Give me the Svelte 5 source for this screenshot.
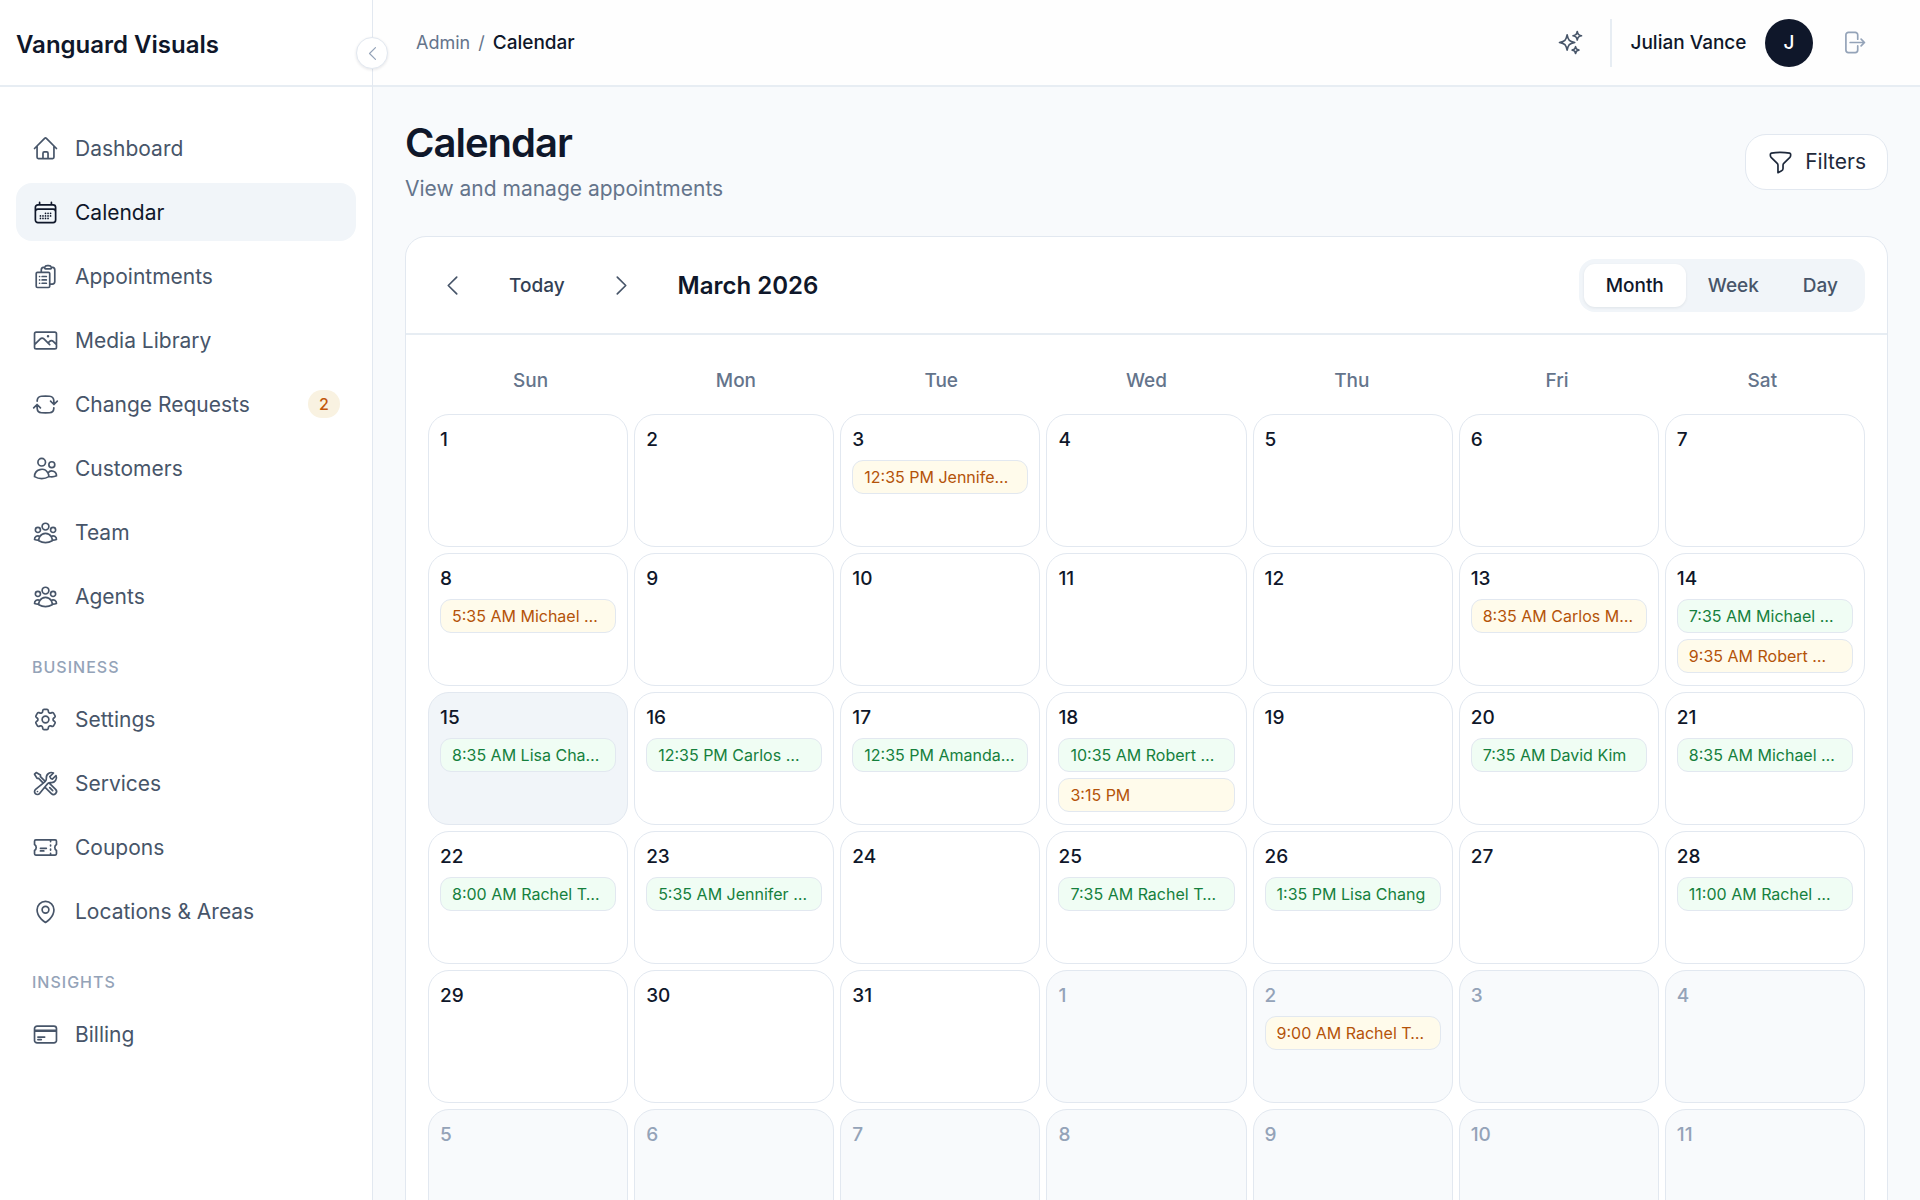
<script lang="ts">
	type Status = 'confirmed' | 'pending';
	type Booking = { label: string; status: Status };
	type Day = { key: string; number: number; outside: boolean; today: boolean; bookings: Booking[] };

	const icons = {
		home: 'm2.25 12 8.954-8.955c.44-.439 1.152-.439 1.591 0L21.75 12M4.5 9.75v10.125c0 .621.504 1.125 1.125 1.125H9.75v-4.875c0-.621.504-1.125 1.125-1.125h2.25c.621 0 1.125.504 1.125 1.125V21h4.125c.621 0 1.125-.504 1.125-1.125V9.75M8.25 21h8.25',
		calendar:
			'M6.75 3v2.25M17.25 3v2.25M3 18.75V7.5a2.25 2.25 0 0 1 2.25-2.25h13.5A2.25 2.25 0 0 1 21 7.5v11.25m-18 0A2.25 2.25 0 0 0 5.25 21h13.5A2.25 2.25 0 0 0 21 18.75m-18 0v-7.5A2.25 2.25 0 0 1 5.25 9h13.5A2.25 2.25 0 0 1 21 11.25v7.5m-9-6h.008v.008H12v-.008ZM12 15h.008v.008H12V15Zm0 2.25h.008v.008H12v-.008ZM9.75 15h.008v.008H9.75V15Zm0 2.25h.008v.008H9.75v-.008ZM7.5 15h.008v.008H7.5V15Zm0 2.25h.008v.008H7.5v-.008Zm6.75-4.5h.008v.008h-.008v-.008Zm0 2.25h.008v.008h-.008V15Zm0 2.25h.008v.008h-.008v-.008Zm2.25-4.5h.008v.008H16.5v-.008Zm0 2.25h.008v.008H16.5V15Z',
		clipboard:
			'M9 12h3.75M9 15h3.75M9 18h3.75m3 .75H18a2.25 2.25 0 0 0 2.25-2.25V6.108c0-1.135-.845-2.098-1.976-2.192a48.424 48.424 0 0 0-1.123-.08m-5.801 0c-.065.21-.1.433-.1.664 0 .414.336.75.75.75h4.5a.75.75 0 0 0 .75-.75 2.25 2.25 0 0 0-.1-.664m-5.8 0A2.251 2.251 0 0 1 13.5 2.25H15c1.012 0 1.867.668 2.15 1.586m-5.8 0c-.376.023-.75.05-1.124.08C9.095 4.01 8.25 4.973 8.25 6.108V8.25m0 0H4.875c-.621 0-1.125.504-1.125 1.125v11.25c0 .621.504 1.125 1.125 1.125h9.75c.621 0 1.125-.504 1.125-1.125V9.375c0-.621-.504-1.125-1.125-1.125H8.25ZM6.75 12h.008v.008H6.75V12Zm0 3h.008v.008H6.75V15Zm0 3h.008v.008H6.75V18Z',
		photo: 'm2.25 15.75 5.159-5.159a2.25 2.25 0 0 1 3.182 0l5.159 5.159m-1.5-1.5 1.409-1.409a2.25 2.25 0 0 1 3.182 0l2.909 2.909m-18 3.75h16.5a1.5 1.5 0 0 0 1.5-1.5V6a1.5 1.5 0 0 0-1.5-1.5H3.75A1.5 1.5 0 0 0 2.25 6v12a1.5 1.5 0 0 0 1.5 1.5Zm10.5-11.25h.008v.008h-.008V8.25Zm.375 0a.375.375 0 1 1-.75 0 .375.375 0 0 1 .75 0Z',
		cycle: 'M19.5 12c0-1.232-.046-2.453-.138-3.662a4.006 4.006 0 0 0-3.7-3.7 48.678 48.678 0 0 0-7.324 0 4.006 4.006 0 0 0-3.7 3.7c-.017.22-.032.441-.046.662M19.5 12l3-3m-3 3-3-3m-12 3c0 1.232.046 2.453.138 3.662a4.006 4.006 0 0 0 3.7 3.7 48.656 48.656 0 0 0 7.324 0 4.006 4.006 0 0 0 3.7-3.7c.017-.22.032-.441.046-.662M4.5 12l3 3m-3-3-3 3',
		users: 'M15 19.128a9.38 9.38 0 0 0 2.625.372 9.337 9.337 0 0 0 4.121-.952 4.125 4.125 0 0 0-7.533-2.493M15 19.128v-.003c0-1.113-.285-2.16-.786-3.07M15 19.128v.106A12.318 12.318 0 0 1 8.624 21c-2.331 0-4.512-.645-6.374-1.766l-.001-.109a6.375 6.375 0 0 1 11.964-3.07M12 6.375a3.375 3.375 0 1 1-6.75 0 3.375 3.375 0 0 1 6.75 0Zm8.25 2.25a2.625 2.625 0 1 1-5.25 0 2.625 2.625 0 0 1 5.25 0Z',
		group: 'M18 18.72a9.094 9.094 0 0 0 3.741-.479 3 3 0 0 0-4.682-2.72m.94 3.198.001.031c0 .225-.012.447-.037.666A11.944 11.944 0 0 1 12 21c-2.17 0-4.207-.576-5.963-1.584A6.062 6.062 0 0 1 6 18.719m12 0a5.971 5.971 0 0 0-.941-3.197m0 0A5.995 5.995 0 0 0 12 12.75a5.995 5.995 0 0 0-5.058 2.772m0 0a3 3 0 0 0-4.681 2.72 8.986 8.986 0 0 0 3.74.477m.94-3.197a5.971 5.971 0 0 0-.94 3.197M15 6.75a3 3 0 1 1-6 0 3 3 0 0 1 6 0Zm6 3a2.25 2.25 0 1 1-4.5 0 2.25 2.25 0 0 1 4.5 0Zm-13.5 0a2.25 2.25 0 1 1-4.5 0 2.25 2.25 0 0 1 4.5 0Z',
		cog: 'M9.594 3.94c.09-.542.56-.94 1.11-.94h2.593c.55 0 1.02.398 1.11.94l.213 1.281c.063.374.313.686.645.87.074.04.147.083.22.127.325.196.72.257 1.075.124l1.217-.456a1.125 1.125 0 0 1 1.37.49l1.296 2.247a1.125 1.125 0 0 1-.26 1.431l-1.003.827c-.293.241-.438.613-.43.992a7.723 7.723 0 0 1 0 .255c-.008.378.137.75.43.991l1.004.827c.424.35.534.955.26 1.43l-1.298 2.247a1.125 1.125 0 0 1-1.369.491l-1.217-.456c-.355-.133-.75-.072-1.076.124a6.47 6.47 0 0 1-.22.128c-.331.183-.581.495-.644.869l-.213 1.281c-.09.543-.56.94-1.11.94h-2.594c-.55 0-1.019-.398-1.11-.94l-.213-1.281c-.062-.374-.312-.686-.644-.87a6.52 6.52 0 0 1-.22-.127c-.325-.196-.72-.257-1.076-.124l-1.217.456a1.125 1.125 0 0 1-1.369-.49l-1.297-2.247a1.125 1.125 0 0 1 .26-1.431l1.004-.827c.292-.24.437-.613.43-.991a6.932 6.932 0 0 1 0-.255c.007-.38-.138-.751-.43-.992l-1.004-.827a1.125 1.125 0 0 1-.26-1.43l1.297-2.247a1.125 1.125 0 0 1 1.37-.491l1.216.456c.356.133.751.072 1.076-.124.072-.044.146-.086.22-.128.332-.183.582-.495.644-.869l.214-1.28ZM15 12a3 3 0 1 1-6 0 3 3 0 0 1 6 0Z',
		tools: 'M11.42 15.17 17.25 21A2.652 2.652 0 0 0 21 17.25l-5.877-5.877M11.42 15.17l2.496-3.03c.317-.384.74-.626 1.208-.766M11.42 15.17l-4.655 5.653a2.548 2.548 0 1 1-3.586-3.586l6.837-5.63m5.108-.233c.55-.164 1.163-.188 1.743-.14a4.5 4.5 0 0 0 4.486-6.336l-3.276 3.277a3.004 3.004 0 0 1-2.25-2.25l3.276-3.276a4.5 4.5 0 0 0-6.336 4.486c.091 1.076-.071 2.264-.904 2.95l-.102.085m-1.745 1.437L5.909 7.5H4.5L2.25 3.75l1.5-1.5L7.5 4.5v1.409l4.26 4.26m-1.745 1.437 1.745-1.437m6.615 8.206L15.75 15.75M4.867 19.125h.008v.008h-.008v-.008Z',
		ticket: 'M16.5 6v.75m0 3v.75m0 3v.75m0 3V18m-9-5.25h5.25M7.5 15h3M3.375 5.25c-.621 0-1.125.504-1.125 1.125v3.026a2.999 2.999 0 0 1 0 5.198v3.026c0 .621.504 1.125 1.125 1.125h17.25c.621 0 1.125-.504 1.125-1.125v-3.026a2.999 2.999 0 0 1 0-5.198V6.375c0-.621-.504-1.125-1.125-1.125H3.375Z',
		pin: 'M15 10.5a3 3 0 1 1-6 0 3 3 0 0 1 6 0ZM19.5 10.5c0 7.142-7.5 11.25-7.5 11.25S4.5 17.642 4.5 10.5a7.5 7.5 0 1 1 15 0Z',
		card: 'M2.25 8.25h19.5M2.25 9h19.5m-16.5 5.25h6m-6 2.25h3m-3.75 3h15a2.25 2.25 0 0 0 2.25-2.25V6.75A2.25 2.25 0 0 0 19.5 4.5h-15a2.25 2.25 0 0 0-2.25 2.25v10.5A2.25 2.25 0 0 0 4.5 19.5Z',
		sparkles:
			'M9.813 15.904 9 18.75l-.813-2.846a4.5 4.5 0 0 0-3.09-3.09L2.25 12l2.846-.813a4.5 4.5 0 0 0 3.09-3.09L9 5.25l.813 2.846a4.5 4.5 0 0 0 3.09 3.09L15.75 12l-2.846.813a4.5 4.5 0 0 0-3.09 3.09ZM18.259 8.715 18 9.75l-.259-1.035a3.375 3.375 0 0 0-2.455-2.456L14.25 6l1.036-.259a3.375 3.375 0 0 0 2.455-2.456L18 2.25l.259 1.035a3.375 3.375 0 0 0 2.456 2.456L21.75 6l-1.035.259a3.375 3.375 0 0 0-2.456 2.456ZM16.894 20.567 16.5 21.75l-.394-1.183a2.25 2.25 0 0 0-1.423-1.423L13.5 18.75l1.183-.394a2.25 2.25 0 0 0 1.423-1.423l.394-1.183.394 1.183a2.25 2.25 0 0 0 1.423 1.423l1.183.394-1.183.394a2.25 2.25 0 0 0-1.423 1.423Z',
		logout: 'M15.75 9V5.25A2.25 2.25 0 0 0 13.5 3h-6a2.25 2.25 0 0 0-2.25 2.25v13.5A2.25 2.25 0 0 0 7.5 21h6a2.25 2.25 0 0 0 2.25-2.25V15m3 0 3-3m0 0-3-3m3 3H9',
		funnel: 'M12 3c2.755 0 5.455.232 8.083.678.533.09.917.556.917 1.096v1.044a2.25 2.25 0 0 1-.659 1.591l-5.432 5.432a2.25 2.25 0 0 0-.659 1.591v2.927a2.25 2.25 0 0 1-1.244 2.013L9.75 21v-6.568a2.25 2.25 0 0 0-.659-1.591L3.659 7.409A2.25 2.25 0 0 1 3 5.818V4.774c0-.54.384-1.006.917-1.096A48.32 48.32 0 0 1 12 3Z',
		left: 'M15.75 19.5 8.25 12l7.5-7.5',
		right: 'm8.25 4.5 7.5 7.5-7.5 7.5'
	};

	type NavItem = { label: string; icon: keyof typeof icons; badge?: number };

	const navGroups: { title?: string; items: NavItem[] }[] = [
		{
			items: [
				{ label: 'Dashboard', icon: 'home' },
				{ label: 'Calendar', icon: 'calendar' },
				{ label: 'Appointments', icon: 'clipboard' },
				{ label: 'Media Library', icon: 'photo' },
				{ label: 'Change Requests', icon: 'cycle', badge: 2 },
				{ label: 'Customers', icon: 'users' },
				{ label: 'Team', icon: 'group' },
				{ label: 'Agents', icon: 'group' }
			]
		},
		{
			title: 'Business',
			items: [
				{ label: 'Settings', icon: 'cog' },
				{ label: 'Services', icon: 'tools' },
				{ label: 'Coupons', icon: 'ticket' },
				{ label: 'Locations & Areas', icon: 'pin' }
			]
		},
		{
			title: 'Insights',
			items: [{ label: 'Billing', icon: 'card' }]
		}
	];

	const weekdays = ['Sun', 'Mon', 'Tue', 'Wed', 'Thu', 'Fri', 'Sat'];
	const views = ['Month', 'Week', 'Day'];

	const bookings: Record<string, Booking[]> = {
		'3-3': [{ label: '12:35 PM Jennife…', status: 'pending' }],
		'3-8': [{ label: '5:35 AM Michael …', status: 'pending' }],
		'3-13': [{ label: '8:35 AM Carlos M…', status: 'pending' }],
		'3-14': [
			{ label: '7:35 AM Michael …', status: 'confirmed' },
			{ label: '9:35 AM Robert …', status: 'pending' }
		],
		'3-15': [{ label: '8:35 AM Lisa Cha…', status: 'confirmed' }],
		'3-16': [{ label: '12:35 PM Carlos …', status: 'confirmed' }],
		'3-17': [{ label: '12:35 PM Amanda…', status: 'confirmed' }],
		'3-18': [
			{ label: '10:35 AM Robert …', status: 'confirmed' },
			{ label: '3:15 PM', status: 'pending' }
		],
		'3-20': [{ label: '7:35 AM David Kim', status: 'confirmed' }],
		'3-21': [{ label: '8:35 AM Michael …', status: 'confirmed' }],
		'3-22': [{ label: '8:00 AM Rachel T…', status: 'confirmed' }],
		'3-23': [{ label: '5:35 AM Jennifer …', status: 'confirmed' }],
		'3-25': [{ label: '7:35 AM Rachel T…', status: 'confirmed' }],
		'3-26': [{ label: '1:35 PM Lisa Chang', status: 'confirmed' }],
		'3-28': [{ label: '11:00 AM Rachel …', status: 'confirmed' }],
		'4-2': [{ label: '9:00 AM Rachel T…', status: 'pending' }]
	};

	// March 2026 starts on a Sunday, the grid always shows six weeks
	const days: Day[] = Array.from({ length: 42 }, (_, i) => {
		const month = i < 31 ? 3 : 4;
		const number = i < 31 ? i + 1 : i - 30;
		const key = `${month}-${number}`;
		return { key, number, outside: month !== 3, today: key === '3-15', bookings: bookings[key] ?? [] };
	});

	let activeItem = $state('Calendar');
	let activeView = $state('Month');
</script>

{#snippet icon(name: keyof typeof icons)}
	<svg class="icon" viewBox="0 0 24 24" aria-hidden="true">
		<path d={icons[name]} />
	</svg>
{/snippet}

<div class="shell">
	<aside class="sidebar">
		<div class="brand">Vanguard Visuals</div>
		<button class="collapse" aria-label="Collapse sidebar">{@render icon('left')}</button>

		<nav class="nav">
			{#each navGroups as group}
				<div class="nav-group">
					{#if group.title}
						<h2 class="nav-title">{group.title}</h2>
					{/if}
					{#each group.items as item}
						<a
							href="#{item.label}"
							class="nav-item"
							class:active={item.label === activeItem}
							onclick={() => (activeItem = item.label)}
						>
							{@render icon(item.icon)}
							<span class="nav-label">{item.label}</span>
							{#if item.badge}
								<span class="badge">{item.badge}</span>
							{/if}
						</a>
					{/each}
				</div>
			{/each}
		</nav>
	</aside>

	<div class="content">
		<header class="topbar">
			<nav class="breadcrumb" aria-label="Breadcrumb">
				<a href="#admin">Admin</a>
				<span>/</span>
				<strong>Calendar</strong>
			</nav>
			<div class="account">
				<button class="icon-btn" aria-label="Assistant">{@render icon('sparkles')}</button>
				<div class="user">
					<span class="user-name">Julian Vance</span>
					<span class="avatar">J</span>
				</div>
				<button class="icon-btn muted" aria-label="Sign out">{@render icon('logout')}</button>
			</div>
		</header>

		<main class="page">
			<div class="page-head">
				<div>
					<h1>Calendar</h1>
					<p>View and manage appointments</p>
				</div>
				<button class="filters">{@render icon('funnel')}Filters</button>
			</div>

			<section class="calendar">
				<div class="toolbar">
					<div class="period">
						<button class="icon-btn" aria-label="Previous month">{@render icon('left')}</button>
						<button class="today-btn">Today</button>
						<button class="icon-btn" aria-label="Next month">{@render icon('right')}</button>
						<h2>March 2026</h2>
					</div>
					<div class="views">
						{#each views as view}
							<button class:active={view === activeView} onclick={() => (activeView = view)}>
								{view}
							</button>
						{/each}
					</div>
				</div>

				<div class="month">
					<div class="weekdays">
						{#each weekdays as weekday}
							<div>{weekday}</div>
						{/each}
					</div>
					<div class="days">
						{#each days as day (day.key)}
							<div class="day" class:outside={day.outside} class:today={day.today}>
								<span class="day-number">{day.number}</span>
								{#each day.bookings as booking}
									<button class="booking {booking.status}">{booking.label}</button>
								{/each}
							</div>
						{/each}
					</div>
				</div>
			</section>
		</main>
	</div>
</div>

<style>
	:global(body) {
		margin: 0;
	}

	.shell {
		--ink: #0f172a;
		--text: #475569;
		--soft: #64748b;
		--faint: #94a3b8;
		--line: #e2e8f0;
		--rule: #e7edf3;
		--fill: #f1f5f9;

		display: flex;
		height: 100vh;
		overflow: hidden;
		background: #f8fafc;
		color: var(--ink);
		font-family: Inter, 'Liberation Sans', sans-serif;
		font-size: 19px;
		line-height: 28px;
	}

	.shell * {
		box-sizing: border-box;
	}

	h1,
	h2,
	p {
		margin: 0;
	}

	a {
		color: inherit;
		text-decoration: none;
	}

	button {
		padding: 0;
		border: 0;
		background: none;
		color: inherit;
		font: inherit;
		cursor: pointer;
	}

	.icon {
		flex: none;
		width: 27px;
		height: 27px;
		fill: none;
		stroke: currentColor;
		stroke-width: 1.5;
		stroke-linecap: round;
		stroke-linejoin: round;
	}

	.sidebar {
		position: relative;
		display: flex;
		flex-direction: column;
		flex: none;
		width: 373px;
		border-right: 1px solid var(--line);
		background: white;
	}

	.brand {
		display: flex;
		align-items: center;
		height: 87px;
		padding: 4px 16px 0;
		border-bottom: 2px solid var(--rule);
		font-size: 24px;
		font-weight: 600;
	}

	.collapse {
		position: absolute;
		top: 37px;
		right: -16px;
		z-index: 1;
		display: flex;
		align-items: center;
		justify-content: center;
		width: 32px;
		height: 32px;
		border: 1px solid var(--line);
		border-radius: 50%;
		background: white;
		box-shadow: 0 1px 3px rgba(15, 23, 42, 0.1);
		color: var(--faint);
	}

	.collapse .icon {
		width: 19px;
		height: 19px;
	}

	.nav {
		padding: 32px 16px;
		overflow-y: auto;
		scrollbar-width: none;
	}

	.nav-group {
		display: flex;
		flex-direction: column;
		gap: 6px;
	}

	.nav-title {
		padding: 32px 16px 6px;
		color: var(--faint);
		font-size: 16px;
		font-weight: 500;
		line-height: 21px;
		letter-spacing: 1px;
		text-transform: uppercase;
	}

	.nav-item {
		display: flex;
		align-items: center;
		gap: 16px;
		height: 58px;
		padding: 0 16px;
		border-radius: 16px;
		color: var(--text);
		font-size: 21px;
	}

	.nav-item.active {
		background: var(--fill);
		color: var(--ink);
	}

	.nav-label {
		flex: 1;
		padding-top: 2px;
	}

	.badge {
		min-width: 32px;
		border-radius: 14px;
		background: #f9f2e1;
		color: #c2570c;
		font-size: 16px;
		font-weight: 500;
		text-align: center;
	}

	.content {
		display: flex;
		flex-direction: column;
		flex: 1;
		min-width: 0;
	}

	.topbar {
		display: flex;
		align-items: center;
		justify-content: space-between;
		flex: none;
		height: 87px;
		padding: 0 43px;
		border-bottom: 2px solid var(--rule);
		background: #fefefe;
	}

	.breadcrumb {
		display: flex;
		gap: 8px;
		color: var(--soft);
		font-size: 18px;
	}

	.breadcrumb strong {
		color: var(--ink);
		font-size: 19px;
		font-weight: 500;
	}

	.account {
		display: flex;
		align-items: center;
		gap: 16px;
	}

	.icon-btn {
		display: flex;
		align-items: center;
		justify-content: center;
		width: 48px;
		height: 48px;
		color: var(--text);
	}

	.icon-btn.muted {
		color: var(--faint);
	}

	.user {
		display: flex;
		align-items: center;
		gap: 16px;
		padding-left: 16px;
		border-left: 2px solid var(--rule);
	}

	.user-name {
		min-width: 121px;
		font-weight: 500;
		text-align: center;
	}

	.avatar {
		width: 48px;
		border-radius: 50%;
		background: var(--ink);
		color: white;
		font-weight: 500;
		line-height: 48px;
		text-align: center;
	}

	.page {
		flex: 1;
		padding: 32px;
		overflow-y: auto;
		scrollbar-width: none;
	}

	.page-head {
		display: flex;
		align-items: center;
		justify-content: space-between;
		margin-bottom: 31px;
	}

	h1 {
		font-size: 40px;
		font-weight: 600;
		line-height: 48px;
		letter-spacing: -1px;
	}

	.page-head p {
		margin-top: 6px;
		color: var(--soft);
		font-size: 21px;
		line-height: 32px;
	}

	.filters {
		display: flex;
		align-items: center;
		gap: 11px;
		height: 56px;
		padding: 0 21px;
		border: 1px solid var(--line);
		border-radius: 21px;
		background: white;
		color: #1e293b;
		font-size: 21px;
	}

	.calendar {
		border: 1px solid var(--line);
		border-radius: 21px;
		background: white;
	}

	.toolbar {
		display: flex;
		align-items: center;
		justify-content: space-between;
		padding: 22px 22px 21px;
		border-bottom: 2px solid var(--rule);
	}

	.period {
		display: flex;
		align-items: center;
		gap: 11px;
	}

	.today-btn {
		padding: 0 22px;
		color: #334155;
		font-weight: 500;
	}

	.toolbar h2 {
		margin-left: 21px;
		font-size: 24px;
		font-weight: 600;
	}

	.views {
		display: flex;
		padding: 5px;
		border-radius: 16px;
		background: var(--fill);
	}

	.views button {
		height: 43px;
		padding: 0 22px;
		border-radius: 11px;
		color: var(--text);
		font-weight: 500;
	}

	.views button.active {
		background: white;
		box-shadow: 0 1px 3px rgba(15, 23, 42, 0.08);
		color: var(--ink);
	}

	.month {
		padding: 21px 22px;
	}

	.weekdays,
	.days {
		display: grid;
		grid-template-columns: repeat(7, minmax(0, 1fr));
	}

	.weekdays {
		margin-bottom: 8px;
		color: var(--soft);
		font-weight: 500;
		line-height: 50px;
		text-align: center;
	}

	.days {
		gap: 6px;
	}

	.day {
		display: flex;
		flex-direction: column;
		gap: 6px;
		min-height: 133px;
		padding: 11px 11px 8px;
		border: 1px solid var(--line);
		border-radius: 21px;
	}

	.day.today {
		background: var(--fill);
	}

	.day.outside {
		background: #f8fafc;
	}

	.day-number {
		font-weight: 500;
	}

	.day.outside .day-number {
		color: var(--faint);
	}

	.booking {
		height: 34px;
		padding: 0 11px;
		border: 1px solid var(--line);
		border-radius: 11px;
		font-size: 16px;
		text-align: left;
		text-overflow: ellipsis;
		white-space: nowrap;
		overflow: hidden;
	}

	.booking.confirmed {
		background: #f0fdf4;
		color: #15803d;
	}

	.booking.pending {
		background: #fffbeb;
		color: #b45309;
	}
</style>
